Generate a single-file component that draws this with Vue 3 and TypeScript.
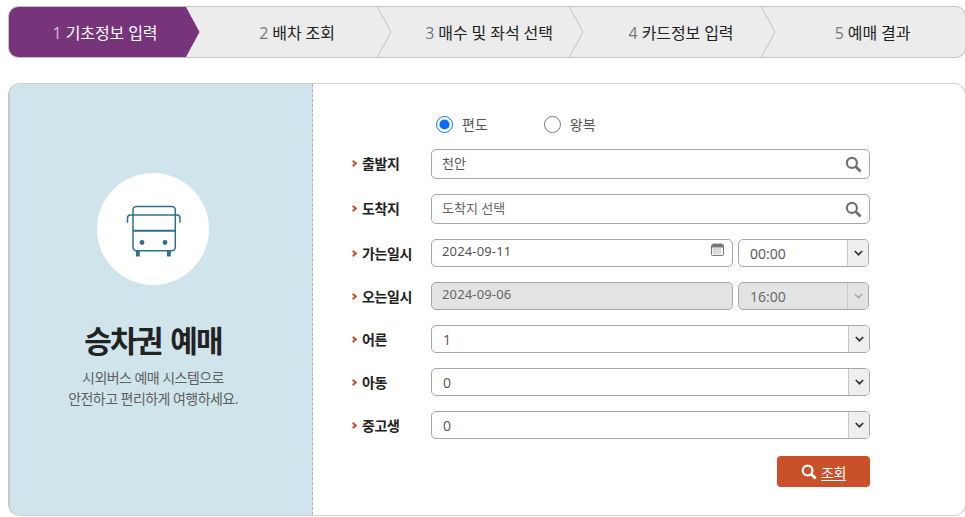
<script setup lang="ts">
const steps = [
  { n: 1, t: '기초정보 입력', w: 177, pad: 15 },
  { n: 2, t: '배차 조회', w: 192, pad: 30 },
  { n: 3, t: '매수 및 좌석 선택', w: 192, pad: 30 },
  { n: 4, t: '카드정보 입력', w: 192, pad: 30 },
  { n: 5, t: '예매 결과', w: 203, pad: 18 },
]
const selects = [
  { label: '어른', value: '1' },
  { label: '아동', value: '0' },
  { label: '중고생', value: '0' },
]
</script>

<template>
  <div class="page">
    <ol class="steps">
      <li v-for="(s, i) in steps" :key="s.n" class="step" :class="{ active: i === 0 }" :style="{ width: s.w + 'px', paddingLeft: s.pad + 'px' }">
        <span class="step-text"><em>{{ s.n }}</em> {{ s.t }}</span>
        <svg v-if="i === 0" class="tip" width="14" height="50" viewBox="0 0 14 50"><path d="M0 0 L13.5 25 L0 50Z" fill="#77347a" /></svg>
        <svg v-else-if="i < 4" class="chev" width="15" height="50" viewBox="0 0 15 50"><path d="M0.5 0 L14 25 L0.5 50" fill="none" stroke="#c6c6c6" /></svg>
      </li>
    </ol>

    <section class="panel">
      <aside class="side">
        <div class="circle">
          <svg width="56" height="56" viewBox="0 0 56 56" fill="none" stroke="#2e7089" stroke-width="1.5">
            <rect x="8" y="5.4" width="42.3" height="44.3" rx="3.5" />
            <path d="M8 14 H50.3" />
            <path d="M8 29.7 H50.3" stroke-width="2" />
            <path d="M2.5 21.7 V17 Q2.5 14 5.5 14 H8 M55 21.7 V17 Q55 14 52 14 H50.3" />
            <circle cx="17" cy="41.5" r="2.4" fill="#2e7089" stroke="none" />
            <circle cx="40" cy="41.5" r="2.4" fill="#2e7089" stroke="none" />
            <rect x="11" y="50" width="3.8" height="5.5" fill="#2e7089" stroke="none" />
            <rect x="42" y="50" width="3.8" height="5.5" fill="#2e7089" stroke="none" />
          </svg>
        </div>
        <h1>승차권 예매</h1>
        <p>시외버스 예매 시스템으로<br />안전하고 편리하게 여행하세요.</p>
      </aside>

      <form class="form" @submit.prevent>
        <div class="radios">
          <label class="radio"><input type="radio" name="trip" checked /><span>편도</span></label>
          <label class="radio"><input type="radio" name="trip" /><span>왕복</span></label>
        </div>

        <div class="row">
          <span class="label up">출발지</span>
          <div class="field tall"><span>천안</span><svg class="glass" width="17" height="17" viewBox="0 0 16 16" fill="none" stroke="#6f6f6f"><circle cx="6.5" cy="6.5" r="4.7" stroke-width="2" /><path d="M10.2 10.2 L14.6 14.6" stroke-width="2.6" /></svg></div>
        </div>
        <div class="row">
          <span class="label up">도착지</span>
          <div class="field tall"><span class="muted">도착지 선택</span><svg class="glass" width="17" height="17" viewBox="0 0 16 16" fill="none" stroke="#6f6f6f"><circle cx="6.5" cy="6.5" r="4.7" stroke-width="2" /><path d="M10.2 10.2 L14.6 14.6" stroke-width="2.6" /></svg></div>
        </div>
        <div class="row">
          <span class="label">가는일시</span>
          <div class="field date"><span class="num">2024-09-11</span>
            <svg class="cal" width="13" height="13" viewBox="0 0 13 13"><rect x="0.5" y="1.5" width="12" height="11" rx="1" fill="#f4f4f4" stroke="#777" /><path d="M1 2 H12 V4.5 H1Z" fill="#777" /><path d="M3 0 V2 M5 0 V2 M8 0 V2 M10 0 V2" stroke="#777" /><path d="M2.5 6 H10.5 M2.5 8 H10.5 M2.5 10 H10.5" stroke="#888" stroke-dasharray="1 1" /></svg>
          </div>
          <div class="select time"><span>00:00</span><i class="arrow"><svg width="9" height="6" viewBox="0 0 9 6" fill="none" stroke="#333" stroke-width="1.7"><path d="M0.8 1 L4.5 4.7 L8.2 1" /></svg></i></div>
        </div>
        <div class="row">
          <span class="label">오는일시</span>
          <div class="field date off"><span class="num">2024-09-06</span></div>
          <div class="select time off"><span>16:00</span><i class="arrow"><svg width="9" height="6" viewBox="0 0 9 6" fill="none" stroke="#a5a5a5" stroke-width="1.4"><path d="M0.8 1 L4.5 4.7 L8.2 1" /></svg></i></div>
        </div>
        <div v-for="s in selects" :key="s.label" class="row">
          <span class="label">{{ s.label }}</span>
          <div class="select wide"><span>{{ s.value }}</span><i class="arrow"><svg width="9" height="6" viewBox="0 0 9 6" fill="none" stroke="#333" stroke-width="1.7"><path d="M0.8 1 L4.5 4.7 L8.2 1" /></svg></i></div>
        </div>

        <div class="actions">
          <button type="button" class="search">
            <svg width="16" height="16" viewBox="0 0 16 16" fill="none" stroke="#fff"><circle cx="6.6" cy="6.6" r="4.9" stroke-width="2.2" /><path d="M10.3 10.3 L14.6 14.6" stroke-width="2.8" /></svg>
            <span>조회</span>
          </button>
        </div>
      </form>
    </section>
  </div>
</template>

<style>
html, body { margin: 0; background: #fff; overflow: hidden; }
</style>

<style scoped>
.page {
  width: 965px;
  height: 517px;
  box-sizing: border-box;
  padding: 6px 0 0 8px;
  font-family: "Open Sans", "Noto Sans CJK KR", sans-serif;
  color: #222;
  overflow: hidden;
}
.steps {
  display: flex;
  list-style: none;
  margin: 0;
  padding: 0;
  width: 958px;
  height: 52px;
  box-sizing: border-box;
  background: #ececec;
  border: 1px solid #c3c3c3;
  border-radius: 10px;
}
.step {
  position: relative;
  display: flex;
  align-items: center;
  justify-content: center;
  flex: none;
  height: 50px;
  font-size: 16px;
  letter-spacing: -0.1px;
  color: #222;
  box-sizing: border-box;
}
.step.active {
  background: #77347a;
  color: #fff;
  border-radius: 9px 0 0 9px;
}
.step em { font-style: normal; color: #777; }
.step.active em { color: #d9b9dc; }
.step-text { white-space: pre; }
.tip { position: absolute; left: 100%; top: 0; }
.chev { position: absolute; right: -14px; top: 0; z-index: 1; }

.panel {
  display: flex;
  margin-top: 25px;
  width: 958px;
  height: 433px;
  box-sizing: border-box;
  border: 1px solid #cfcfcf;
  border-left: 2px solid #c9c9c9;
  border-radius: 12px;
  overflow: hidden;
}
.side {
  flex: none;
  width: 303px;
  box-sizing: border-box;
  background: #cfe4eb;
  border-right: 1px dashed #a9b4b8;
  display: flex;
  flex-direction: column;
  align-items: center;
  padding: 89px 16px 0 0;
}
.circle {
  width: 112px;
  height: 112px;
  border-radius: 50%;
  background: #fff;
  display: flex;
  align-items: center;
  justify-content: center;
}
h1 {
  margin: 38px 0 0;
  font-size: 30px;
  line-height: 36px;
  font-weight: 700;
  letter-spacing: -1.9px;
  word-spacing: 3px;
  color: #222;
}
.side p {
  margin: 8px 0 0;
  font-size: 14px;
  line-height: 21px;
  letter-spacing: -0.55px;
  color: #5f5f5f;
  text-align: center;
  white-space: nowrap;
}
.form {
  flex: 1;
  min-width: 0;
  display: flex;
  flex-direction: column;
  gap: 15px;
  padding: 30px 0 0 39px;
  box-sizing: border-box;
  font-size: 14px;
}
.radios {
  display: flex;
  height: 20px;
  padding-left: 84px;
  gap: 56px;
}
.radio {
  display: flex;
  align-items: center;
  gap: 9px;
  font-size: 14px;
  color: #555;
}
.radio input {
  appearance: auto;
  width: 17px;
  height: 17px;
  margin: 0;
  accent-color: #0b6ff5;
}
.row { display: flex; align-items: center; }
.label {
  position: relative;
  flex: none;
  width: 79px;
  padding-left: 10px;
  box-sizing: border-box;
  font-size: 14px;
  font-weight: 700;
  letter-spacing: -0.4px;
  color: #222;
}
.label.up { margin-top: -2px; }
.label::before {
  content: "";
  position: absolute;
  left: -1px;
  top: 50%;
  width: 3px;
  height: 3px;
  margin-top: -2.5px;
  border-top: 2px solid #c9512a;
  border-right: 2px solid #c9512a;
  transform: rotate(45deg);
}
.field, .select {
  position: relative;
  display: flex;
  align-items: center;
  box-sizing: border-box;
  background: #fff;
  border: 1px solid #a6a6a6;
  border-radius: 5px;
  color: #555;
  font-size: 14px;
}
.field { padding-left: 10px; }
.tall { width: 439px; height: 30px; font-size: 13px; }
.tall span { position: relative; top: -2px; }
.muted { color: #666; }
.glass { position: absolute; right: 7px; top: 6px; }
.date { width: 302px; height: 28px; }
.num { position: relative; top: -2px; font-family: "Noto Sans", sans-serif; font-size: 13px; letter-spacing: 0.15px; }
.cal { position: absolute; right: 8px; top: 3px; }
.select { padding-left: 11px; height: 28px; }
.wide { width: 439px; }
.time { width: 131px; margin-left: 5px; }
.arrow {
  position: absolute;
  right: 0;
  top: 0;
  bottom: 0;
  width: 20px;
  display: flex;
  align-items: center;
  justify-content: center;
  background: #efefef;
  border-left: 1px solid #c8c8c8;
  border-radius: 0 4px 4px 0;
}
.off { background: #e3e3e3; color: #666; }
.off .arrow { background: #e3e3e3; }
.actions {
  display: flex;
  justify-content: flex-end;
  width: 518px;
  margin-top: 2px;
}
.search {
  display: flex;
  align-items: center;
  justify-content: center;
  gap: 4px;
  width: 93px;
  height: 31px;
  padding: 0;
  border: 0;
  border-radius: 4px;
  background: #c9512a;
  color: #fff;
  font: inherit;
  font-size: 14px;
}
.search span { letter-spacing: -0.5px; text-decoration: underline; text-underline-offset: 2px; }
</style>
